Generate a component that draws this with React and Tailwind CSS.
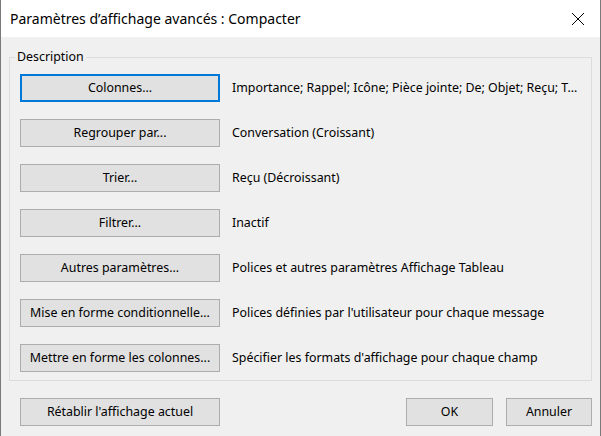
import React from 'react';

const rows = [
  { label: 'Colonnes...', value: 'Importance; Rappel; Icône; Pièce jointe; De; Objet; Reçu; T…', focus: true },
  { label: 'Regrouper par...', value: 'Conversation (Croissant)' },
  { label: 'Trier...', value: 'Reçu (Décroissant)' },
  { label: 'Filtrer...', value: 'Inactif' },
  { label: 'Autres paramètres...', value: 'Polices et autres paramètres Affichage Tableau' },
  { label: 'Mise en forme conditionnelle...', value: "Polices définies par l'utilisateur pour chaque message" },
  { label: 'Mettre en forme les colonnes...', value: "Spécifier les formats d'affichage pour chaque champ" },
];

function Btn({ children, focus, className = '' }) {
  return (
    <button
      className={
        'h-[28px] flex items-center justify-center bg-[#e1e1e1] text-black ' +
        (focus ? 'border-2 border-[#0078d7] ' : 'border border-[#adadad] ') +
        className
      }
    >
      {children}
    </button>
  );
}

export default function App() {
  return (
    <div
      className="w-[601px] h-[436px] bg-[#f0f0f0] border-x border-[#7a7a7a] flex flex-col text-[12.4px] text-black"
      style={{ fontFamily: '"Noto Sans", "Open Sans", sans-serif' }}
    >
      <div className="h-[37px] bg-white flex items-center justify-between pl-[9px] pr-[15px] shrink-0">
        <span className="text-[14px] leading-none">Paramètres d’affichage avancés : Compacter</span>
        <svg width="14" height="14" viewBox="0 0 14 14">
          <path d="M1 1 L13 13 M13 1 L1 13" stroke="#000" strokeWidth="1" />
        </svg>
      </div>

      <fieldset className="mt-[12px] mx-[8px] border border-[#dcdcdc] pl-[10px] pr-[10px] pb-[8px]">
        <legend className="-ml-[5px] px-[2px] leading-[16px]">Description</legend>
        <div className="flex flex-col gap-[17px] pt-[9px]">
          {rows.map((r) => (
            <div key={r.label} className="flex items-center gap-[12px]">
              <Btn focus={r.focus} className="w-[200px] shrink-0">{r.label}</Btn>
              <span className="whitespace-nowrap">{r.value}</span>
            </div>
          ))}
        </div>
      </fieldset>

      <div className="flex items-center mt-[17px] pl-[19px] pr-[8px]">
        <Btn className="w-[200px]">Rétablir l'affichage actuel</Btn>
        <div className="ml-auto flex gap-[13px]">
          <Btn className="w-[87px]">OK</Btn>
          <Btn className="w-[86px]">Annuler</Btn>
        </div>
      </div>
    </div>
  );
}
